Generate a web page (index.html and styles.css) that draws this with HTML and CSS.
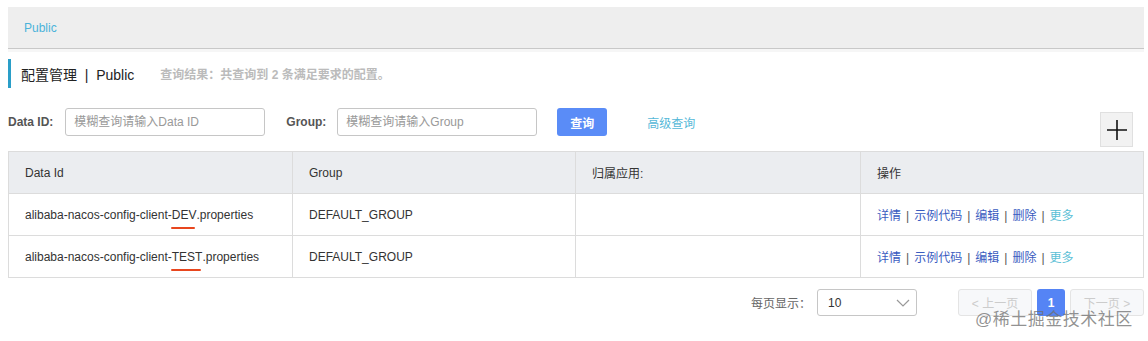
FILE: index.html
```html
<!DOCTYPE html>
<html>
<head>
  <title>配置管理</title>
  <link rel="stylesheet" href="styles.css">
</head>
<body>
  <div class="page">
    <div class="ns-bar">
      <a class="ns-link" href="#">Public</a>
    </div>

    <div class="title-bar">
      <span class="title">配置管理 &nbsp;|&nbsp; Public</span>
      <span class="summary">查询结果：共查询到 2 条满足要求的配置。</span>
    </div>

    <div class="search-row">
      <label class="field-label" for="dataId">Data ID:</label>
      <input class="field" type="text" id="dataId" placeholder="模糊查询请输入Data ID">
      <label class="field-label group-label" for="group">Group:</label>
      <input class="field" type="text" id="group" placeholder="模糊查询请输入Group">
      <button class="btn-primary" type="button">查询</button>
      <a class="adv-link" href="#">高级查询</a>
      <button class="btn-add" type="button">
        <svg width="22" height="22" viewBox="0 0 22 22"><path d="M11 1v20M1 11h20" stroke="#111" stroke-width="1.6" fill="none"/></svg>
      </button>
    </div>

    <table class="config-table">
      <thead>
        <tr>
          <th>Data Id</th>
          <th>Group</th>
          <th>归属应用:</th>
          <th>操作</th>
        </tr>
      </thead>
      <tbody>
        <tr>
          <td>alibaba-nacos-config-client-<span class="mark">DEV</span>.properties</td>
          <td>DEFAULT_GROUP</td>
          <td></td>
          <td class="ops"><a href="#">详情</a><i>|</i><a href="#">示例代码</a><i>|</i><a href="#">编辑</a><i>|</i><a href="#">删除</a><i>|</i><a class="more" href="#">更多</a></td>
        </tr>
        <tr>
          <td>alibaba-nacos-config-client-<span class="mark">TEST</span>.properties</td>
          <td>DEFAULT_GROUP</td>
          <td></td>
          <td class="ops"><a href="#">详情</a><i>|</i><a href="#">示例代码</a><i>|</i><a href="#">编辑</a><i>|</i><a href="#">删除</a><i>|</i><a class="more" href="#">更多</a></td>
        </tr>
      </tbody>
    </table>

    <div class="pager-row">
      <span class="page-size-label">每页显示：</span>
      <div class="page-size">
        <span>10</span>
        <svg width="14" height="8" viewBox="0 0 14 8"><path d="M1 1l6 6 6-6" stroke="#999" stroke-width="1.2" fill="none"/></svg>
      </div>
      <div class="pager">
        <button class="pg-btn" disabled>&lt; 上一页</button>
        <button class="pg-num">1</button>
        <button class="pg-btn" disabled>下一页 &gt;</button>
      </div>
    </div>

    <div class="watermark">@稀土掘金技术社区</div>
  </div>
</body>
</html>
```

FILE: styles.css
```css
body {
  margin: 0;
  font-family: "Liberation Sans", "Noto Sans CJK SC", sans-serif;
  font-size: 12px;
  color: #333;
  background: #fff;
}

.page {
  position: relative;
  padding: 7px 4px 0 8px;
  height: 334px;
}

.ns-bar {
  height: 41px;
  background: #eeeeee;
  border-bottom: 1px solid #c8c8c8;
  display: flex;
  align-items: center;
  padding-left: 16px;
  box-shadow: 0 3px 0 #f6f6f6;
}

.ns-link {
  color: #4bb3da;
  text-decoration: none;
  font-size: 12px;
}

.title-bar {
  margin-top: 10px;
  height: 29px;
  border-left: 3px solid #2a9ec8;
  display: flex;
  align-items: center;
  padding-left: 10px;
}

.title {
  font-size: 14px;
  color: #222;
}

.summary {
  margin-left: 26px;
  font-size: 12px;
  color: #bbb;
  font-weight: bold;
}

.search-row {
  display: flex;
  align-items: center;
  margin-top: 20px;
  height: 28px;
  position: relative;
}

.field-label {
  font-weight: bold;
  color: #555;
  font-size: 12px;
  margin-right: 12px;
}

.group-label {
  margin-left: 21px;
  margin-right: 11px;
}

.field {
  width: 200px;
  height: 28px;
  box-sizing: border-box;
  border: 1px solid #c6c6c6;
  border-radius: 3px;
  padding: 0 8px;
  font-family: inherit;
  font-size: 12px;
  color: #333;
}

.field::placeholder {
  color: #999;
}

.btn-primary {
  margin-left: 20px;
  width: 50px;
  height: 28px;
  border: none;
  border-radius: 3px;
  background: #5a8cf7;
  color: #fff;
  font-family: inherit;
  font-size: 12px;
  font-weight: bold;
}

.adv-link {
  margin-left: 40px;
  color: #55b8d8;
  text-decoration: none;
}

.btn-add {
  margin-left: auto;
  margin-right: 11px;
  align-self: flex-start;
  margin-top: 4px;
  width: 33px;
  height: 35px;
  background: #f2f2f2;
  border: 1px solid #e0e0e0;
  display: flex;
  align-items: center;
  justify-content: center;
  padding: 0;
}

.config-table {
  margin-top: 15px;
  width: 1135px;
  border-collapse: collapse;
  table-layout: fixed;
}

.config-table th,
.config-table td {
  box-sizing: border-box;
  border: 1px solid #dcdcdc;
  padding: 0 16px;
  text-align: left;
  font-size: 12px;
  color: #333;
  font-weight: normal;
  white-space: nowrap;
}

.config-table th {
  height: 42px;
  background: #ebedf0;
}

.config-table td {
  height: 42px;
}

.config-table th:nth-child(1) { width: 284px; }
.config-table th:nth-child(2) { width: 283px; }
.config-table th:nth-child(3) { width: 285px; }
.config-table th:nth-child(4) { width: 283px; }

.mark {
  position: relative;
}

.mark::after {
  content: "";
  position: absolute;
  left: -1px;
  right: 1px;
  bottom: -7px;
  height: 2px;
  border-radius: 1px;
  background: #e8461e;
}

.ops a {
  color: #3a5cbf;
  text-decoration: none;
}

.ops a.more {
  color: #5bc0d6;
}

.ops i {
  font-style: normal;
  margin: 0 5px;
  color: #555;
}

.pager-row {
  display: flex;
  align-items: center;
  justify-content: flex-end;
  margin-top: 11px;
  height: 27px;
}

.page-size-label {
  color: #666;
}

.page-size {
  margin-left: 6px;
  width: 100px;
  height: 27px;
  box-sizing: border-box;
  border: 1px solid #c6c6c6;
  border-radius: 3px;
  display: flex;
  align-items: center;
  justify-content: space-between;
  padding: 0 6px 0 10px;
  color: #333;
}

.pager {
  display: flex;
  margin-left: 41px;
  gap: 5px;
}

.pg-btn {
  width: 74px;
  height: 27px;
  border: 1px solid #e4e4e4;
  border-radius: 3px;
  background: #f7f8fa;
  color: #ccc;
  font-family: inherit;
  font-size: 12px;
}

.pg-num {
  width: 28px;
  height: 27px;
  border: none;
  border-radius: 3px;
  background: #5584f5;
  color: #fff;
  font-family: inherit;
  font-size: 12px;
  font-weight: bold;
}

.watermark {
  position: absolute;
  left: 975px;
  top: 305px;
  font-size: 17px;
  color: rgba(110, 110, 110, 0.75);
  letter-spacing: 0.5px;
}
```
